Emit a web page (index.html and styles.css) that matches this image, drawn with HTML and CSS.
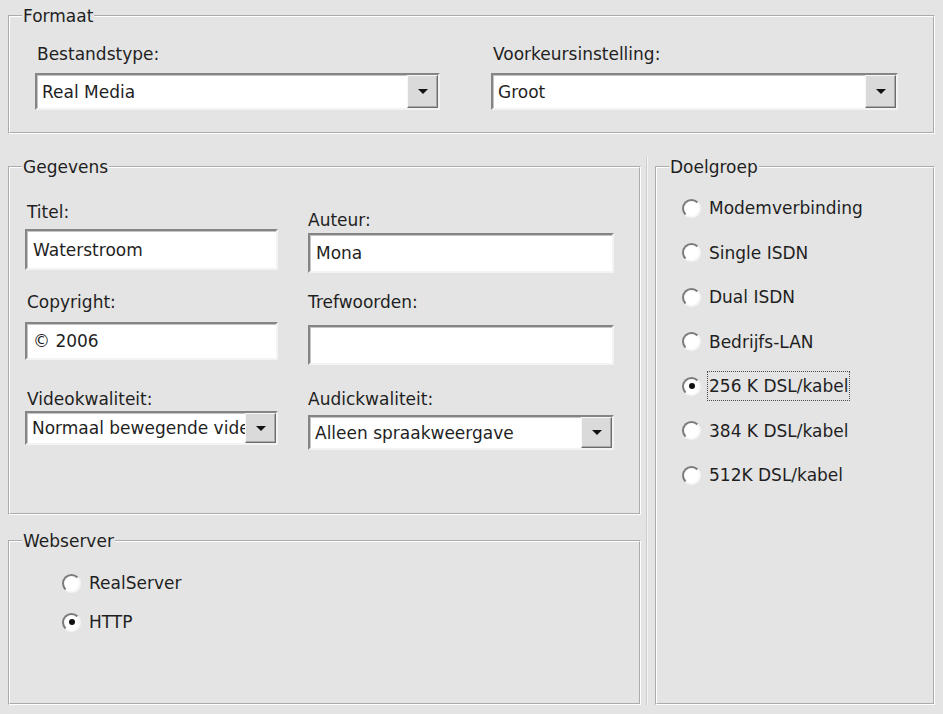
FILE: index.html
```html
<!doctype html>
<html lang="nl">
  <head>
    <meta charset="utf-8">
    <title>Exportinstellingen</title>
    <link rel="stylesheet" href="styles.css">
  </head>
  <body>
    <div class="dialog">

      <fieldset class="group format">
        <legend>Formaat</legend>
        <div class="body">
          <div class="field col-a">
            <div class="caption">Bestandstype:</div>
            <div class="combo tall"><span class="value">Real Media</span><span class="drop"></span></div>
          </div>
          <div class="field col-b">
            <div class="caption">Voorkeursinstelling:</div>
            <div class="combo tall"><span class="value">Groot</span><span class="drop"></span></div>
          </div>
        </div>
      </fieldset>

      <div class="lower">
        <div class="left-col">

          <fieldset class="group details">
            <legend>Gegevens</legend>
            <div class="body">
              <div class="col-left">
                <div class="caption">Titel:</div>
                <div class="edit title-box">Waterstroom</div>
                <div class="caption gap-copy">Copyright:</div>
                <div class="edit copy-box">© 2006</div>
                <div class="caption gap-video">Videokwaliteit:</div>
                <div class="combo video-box"><span class="value">Normaal bewegende video</span><span class="drop"></span></div>
              </div>
              <div class="col-right">
                <div class="caption">Auteur:</div>
                <div class="edit author-box">Mona</div>
                <div class="caption gap-keys">Trefwoorden:</div>
                <div class="edit keys-box"></div>
                <div class="caption gap-audio">Audickwaliteit:</div>
                <div class="combo audio-box"><span class="value">Alleen spraakweergave</span><span class="drop"></span></div>
              </div>
            </div>
          </fieldset>

          <fieldset class="group server">
            <legend>Webserver</legend>
            <div class="body">
              <div class="option"><span class="radio"></span><span>RealServer</span></div>
              <div class="option"><span class="radio on"></span><span>HTTP</span></div>
            </div>
          </fieldset>

        </div>

        <div class="divider"></div>

        <fieldset class="group audience">
          <legend>Doelgroep</legend>
          <div class="body">
            <div class="option"><span class="radio"></span><span>Modemverbinding</span></div>
            <div class="option"><span class="radio"></span><span>Single ISDN</span></div>
            <div class="option"><span class="radio"></span><span>Dual ISDN</span></div>
            <div class="option"><span class="radio"></span><span>Bedrijfs-LAN</span></div>
            <div class="option"><span class="radio on"></span><span class="focus">256 K DSL/kabel</span></div>
            <div class="option"><span class="radio"></span><span>384 K DSL/kabel</span></div>
            <div class="option"><span class="radio"></span><span>512K DSL/kabel</span></div>
          </div>
        </fieldset>
      </div>

    </div>
  </body>
</html>
```

FILE: styles.css
```css
* {
  box-sizing: border-box;
}
body {
  margin: 0;
  background: #e4e4e4;
  font-family: "DejaVu Sans", Verdana, sans-serif;
  font-size: 17px;
  line-height: 20px;
  color: #1f1f1f;
}
.dialog {
  width: 943px;
  padding: 6px 8px 0;
}

/* etched group boxes */
.group {
  margin: 0;
  padding: 0;
  min-width: 0;
  border: 2px groove #fff;
}
.group > legend {
  margin-left: 12px;
  padding: 0 1px;
  line-height: 20px;
}

/* Formaat */
.format .body {
  display: flex;
  gap: 51px;
  padding: 18px 0 22px 25px;
}
.col-a {
  width: 405px;
}
.col-b {
  width: 407px;
}
.field .caption {
  margin-left: 2px;
}
.field .combo {
  margin-top: 9px;
}

/* text boxes and combo boxes */
.edit,
.combo {
  background: #fff;
  border: 2px solid;
  border-color: #858585 #f3f3f3 #f3f3f3 #858585;
  box-shadow: inset 1px 1px 0 #c4c4c4;
}
.edit {
  padding: 0 6px;
  display: flex;
  align-items: center;
  white-space: nowrap;
}
.combo {
  display: flex;
}
.combo.tall {
  height: 37px;
}
.combo .value {
  flex: 1;
  min-width: 0;
  overflow: hidden;
  white-space: nowrap;
  padding-left: 5px;
  display: flex;
  align-items: center;
}
.drop {
  width: 31px;
  flex: none;
  background: #dadada;
  border: 1px solid;
  border-color: #f7f7f7 #6c6c6c #6c6c6c #f7f7f7;
  box-shadow: inset -1px -1px 0 #a9a9a9;
  display: grid;
  place-items: center;
}
.drop::after {
  content: "";
  border-left: 5px solid transparent;
  border-right: 5px solid transparent;
  border-top: 5px solid #111;
}

/* lower part */
.lower {
  display: flex;
  margin-top: 23px;
}
.left-col {
  width: 633px;
  display: flex;
  flex-direction: column;
  gap: 16px;
}
.divider {
  width: 14px;
  display: flex;
  justify-content: center;
}
.divider::before {
  content: "";
  width: 1px;
  margin-right: 4px;
  background: #cdcdcd;
  box-shadow: 1px 0 0 #f4f4f4;
}

/* Gegevens */
.details .body {
  display: flex;
  height: 336px;
  padding: 25px 0 0 15px;
}
.col-left {
  width: 253px;
}
.col-left .caption {
  margin-left: 2px;
}
.col-right {
  width: 306px;
  margin-left: 30px;
  padding-top: 8px;
}
.title-box {
  margin-top: 7px;
  height: 41px;
}
.gap-copy {
  margin-top: 22px;
}
.copy-box {
  margin-top: 10px;
  height: 38px;
}
.gap-video {
  margin-top: 29px;
}
.video-box {
  margin-top: 2px;
  height: 34px;
}
.author-box {
  margin-top: 3px;
  height: 40px;
}
.gap-keys {
  margin-top: 19px;
}
.keys-box {
  margin-top: 13px;
  height: 40px;
}
.gap-audio {
  margin-top: 24px;
}
.audio-box {
  margin-top: 6px;
  height: 35px;
}

/* radio groups */
.option {
  display: flex;
  align-items: center;
  gap: 8px;
}
.radio {
  width: 19px;
  height: 19px;
  flex: none;
  border-radius: 50%;
  background: #fff;
  border: 2px solid;
  border-color: #7b7b7b #f6f6f6 #f6f6f6 #7b7b7b;
  display: grid;
  place-items: center;
}
.radio.on::after {
  content: "";
  width: 6px;
  height: 6px;
  border-radius: 50%;
  background: #111;
}
.focus {
  margin: -5px -2px;
  padding: 4px 1px;
  border: 1px dotted #4a4a4a;
}

.server .body {
  height: 152px;
  padding: 22px 0 0 52px;
  display: flex;
  flex-direction: column;
  gap: 19px;
}
.audience {
  width: 280px;
}
.audience .body {
  height: 526px;
  padding: 21px 0 0 25px;
  display: flex;
  flex-direction: column;
  gap: 24.5px;
}
```
